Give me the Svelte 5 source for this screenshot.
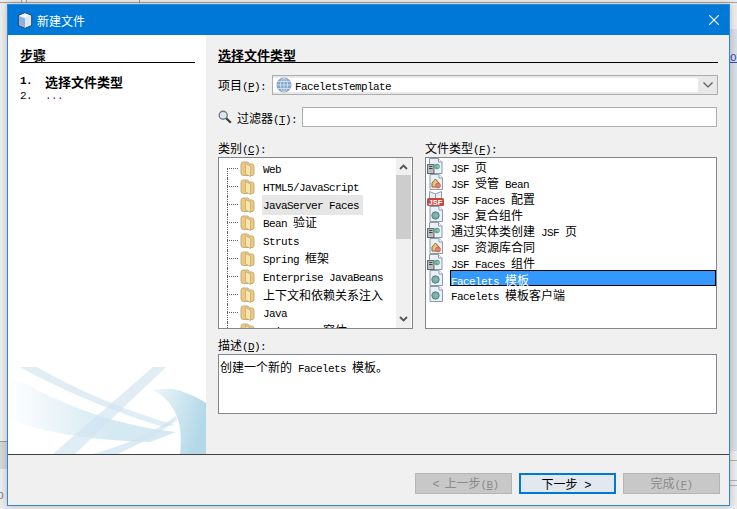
<script>
	const categories = [
		'Web',
		'HTML5/JavaScript',
		'JavaServer Faces',
		'Bean 验证',
		'Struts',
		'Spring 框架',
		'Enterprise JavaBeans',
		'上下文和依赖关系注入',
		'Java',
		'Swing GUI 窗体'
	];

	const fileTypes = [
		{ name: 'JSF 页', icon: 'server' },
		{ name: 'JSF 受管 Bean', icon: 'bean' },
		{ name: 'JSF Faces 配置', icon: 'jsf' },
		{ name: 'JSF 复合组件', icon: 'globe' },
		{ name: '通过实体类创建 JSF 页', icon: 'server' },
		{ name: 'JSF 资源库合同', icon: 'bean' },
		{ name: 'JSF Faces 组件', icon: 'server' },
		{ name: 'Facelets 模板', icon: 'globe' },
		{ name: 'Facelets 模板客户端', icon: 'globe' }
	];

	// ascii runs go in the narrow latin face, the rest stays in the CJK one
	function runs(text) {
		return text.match(/[\x00-\x7f]+|[^\x00-\x7f]+/g).map((part) => ({
			part,
			latin: part.charCodeAt(0) < 128
		}));
	}
</script>

{#snippet mixed(text)}
	{#each runs(text) as run}<span class={run.latin ? 'lat' : ''}>{run.part}</span>{/each}
{/snippet}

{#snippet label(text, key)}
	<span>{text}</span><span class="lat">(<u>{key}</u>):</span>
{/snippet}

{#snippet page()}
	<path d="M2.500.5h9l3.500 3.500v11.500h-12.500z" fill="#eaf0f5" stroke="#8e9aa6" />
	<path d="M11.500.5v3.500h3.500" fill="#fff" stroke="#8e9aa6" />
{/snippet}

{#snippet fileIcon(kind)}
	<svg class="ficon" viewBox="0 0 20 17" width="20" height="17">
		{#if kind === 'server'}
			{@render page()}
			<rect x=".5" y="6.500" width="6.500" height="9" fill="#b8bcc0" stroke="#666" />
			<path d="M2 8.500h3.500M2 10.500h3.500" stroke="#444" />
			<circle cx="10" cy="8.500" r="2.800" fill="#5aa5a0" />
			<path d="M8.500 8.500h3.500M10.500 7l1.500 1.500-1.500 1.500" fill="none" stroke="#8fd070" />
		{:else if kind === 'bean'}
			<g transform="translate(.5 0)">{@render page()}</g>
			<path d="M5 9l3.500-4L12 9v4H5z" fill="#edc27a" stroke="#8a6a3a" />
			<circle cx="11" cy="11.500" r="2.500" fill="#e48073" stroke="#b5554a" stroke-width=".6" />
		{:else if kind === 'jsf'}
			<path d="M2.500 1.500l6 2.500 6-2.500v9h-12z" fill="#e8eef4" stroke="#8e9aa6" />
			<path d="M8.500 4v6" stroke="#8e9aa6" />
			<rect x="0" y="8" width="17" height="8" rx="1.500" fill="#c0483f" />
			<text x="8.500" y="14.800" text-anchor="middle" class="jsf-label">JSF</text>
		{:else}
			<g transform="translate(.5 0)">{@render page()}</g>
			<circle cx="8.500" cy="9.500" r="3.700" fill="#78a9b8" stroke="#56808d" />
			<path d="M6.300 9.500h3.800M8.300 7.700l2 1.800-2 1.800" fill="none" stroke="#7dc766" stroke-width="1.100" />
		{/if}
	</svg>
{/snippet}

<div class="screen">
	<div class="backdrop" aria-hidden="true">
		<i class="b-top"></i>
		<i class="b-v1"></i>
		<i class="b-v2"></i>
		<i class="b-v3"></i>
		<i class="b-right"></i>
		<i class="b-link">OT</i>
		<i class="b-left"></i>
		<i class="b-leftline"></i>
		<i class="b-r1"></i>
		<i class="b-r2"></i>
		<i class="b-r3"></i>
		<i class="b-p">p</i>
	</div>

	<div class="dialog">
		<header class="titlebar">
			<svg class="cube" viewBox="0 0 16 17" width="16" height="17">
				<path d="M8 .8l6.600 2.600v10L8 16.200 1.400 13.400v-10z" fill="#c9d9ec" stroke="#24486e" stroke-width="1.100" />
				<path d="M1.900 3.800L8 6.300v9.400l-6.100-2.600z" fill="#8fb0d8" />
				<path d="M8 6.300l6.100-2.500L8 1.300 1.900 3.800z" fill="#f0f4f8" />
				<path d="M8 6.300l6.100-2.500v9.300L8 15.700z" fill="#dfe8ee" />
			</svg>
			<span class="title">新建文件</span>
			<svg class="close" viewBox="0 0 10 10" width="10" height="10">
				<path d="M0 0l10 10M10 0L0 10" stroke="#fff" stroke-width="1.100" />
			</svg>
		</header>

		<div class="body">
			<aside class="steps">
				<h2 class="heading">步骤</h2>
				<ol>
					<li class="current"><span class="lat num">1.</span><span>选择文件类型</span></li>
					<li class="next"><span class="lat num">2.</span><span class="lat dots">...</span></li>
				</ol>
				<svg class="swoosh" viewBox="8 365 198 89" width="198" height="89" aria-hidden="true">
					<defs>
						<linearGradient id="fade" x1="0" x2="1" y1="0" y2="0">
							<stop offset="0" stop-color="#d5e9f3" stop-opacity=".05" />
							<stop offset=".6" stop-color="#d5e9f3" />
						</linearGradient>
						<linearGradient id="swing" x1="0" x2="1" y1="0" y2=".35">
							<stop offset="0" stop-color="#eef6f9" />
							<stop offset="1" stop-color="#b3d8e8" />
						</linearGradient>
					</defs>
					<path d="M10 376C60 403 110 425 176 432L150 442C100 441 50 434 10 420z" fill="url(#fade)" />
					<path d="M20 367H37C80 392 130 412 175 425L163 427C115 412 65 392 20 367z" fill="#cfe4ef" opacity=".65" />
					<path d="M166 367H153L53 454H75z" fill="#cfe4ef" opacity=".65" />
					<path d="M153 390C160 389 168 389 173 389C186 392 197 397 206 403V454H180C184 425 176 402 153 390z" fill="url(#swing)" />
					<path d="M93 454C120 446 150 436 176 416L177 420C155 437 130 448 118 454z" fill="#cfe4ef" opacity=".7" />
				</svg>
			</aside>

			<main class="content">
				<h2 class="heading">选择文件类型</h2>

				<div class="row combo-row">
					<label class="field-label tight">{@render label('项目', 'P')}</label>
					<div class="combo">
						<div class="combo-value">
							<svg viewBox="0 0 16 16" width="16" height="16">
								<circle cx="8" cy="8" r="7" fill="#7fa6cc" stroke="#8a9bb0" />
								<path d="M1 8h14M2 4.500h12M2 11.500h12M8 1v14" stroke="#cfdeec" fill="none" />
								<ellipse cx="8" cy="8" rx="3.500" ry="7" stroke="#cfdeec" fill="none" />
							</svg>
							<span class="lat">FaceletsTemplate</span>
						</div>
						<svg class="chev" viewBox="0 0 10 6" width="10" height="6">
							<path d="M.5.5L5 5 9.500.5" fill="none" stroke="#555" stroke-width="1.100" />
						</svg>
					</div>
				</div>

				<div class="row filter-row">
					<svg class="search" viewBox="0 0 14 14" width="14" height="14">
						<circle cx="5.200" cy="5.200" r="4" fill="#dbe8f2" stroke="#6c7a86" stroke-width="1.400" />
						<path d="M8.300 8.300l4.500 4.500" stroke="#3c3c3c" stroke-width="2.200" />
					</svg>
					<label class="field-label">{@render label('过滤器', 'T')}</label>
					<input class="filter" type="text" />
				</div>

				<div class="lists">
					<div class="col">
						<label class="field-label tight">{@render label('类别', 'C')}</label>
						<div class="listbox tree-box">
							<ul class="tree">
								{#each categories as item}
									<li class:active={item === 'JavaServer Faces'}>
										<i class="twig"></i>
										<svg viewBox="0 0 15 17" width="15" height="17">
											<path d="M1 3.500Q1 1 3 1h4q2 0 2 2h2.500q2.500 0 2.500 2.500v7q0 2-2 2H3.500Q1 14.500 1 12z" fill="#ecc982" stroke="#c4ad76" />
											<path d="M5.500 2.500l5 2.500v10.500l-5-2.500z" fill="#f8e4ad" stroke="#cdb479" />
										</svg>
										<span class="name">{@render mixed(item)}</span>
									</li>
								{/each}
							</ul>
							<div class="scrollbar">
								<svg viewBox="0 0 9 6" width="9" height="6"><path d="M1 5l3.500-3.500L8 5" fill="none" stroke="#555" stroke-width="1.800" /></svg>
								<div class="track"><div class="thumb"></div></div>
								<svg viewBox="0 0 9 6" width="9" height="6"><path d="M1 1l3.500 3.500L8 1" fill="none" stroke="#555" stroke-width="1.800" /></svg>
							</div>
						</div>
					</div>
					<div class="col">
						<label class="field-label tight">{@render label('文件类型', 'F')}</label>
						<ul class="listbox types">
							{#each fileTypes as item}
								<li class:selected={item.name === 'Facelets 模板'}>
									{@render fileIcon(item.icon)}
									<span class="name">{@render mixed(item.name)}</span>
								</li>
							{/each}
						</ul>
					</div>
				</div>

				<label class="field-label tight desc-label">{@render label('描述', 'D')}</label>
				<div class="desc">{@render mixed('创建一个新的 Facelets 模板。')}</div>
			</main>
		</div>

		<footer class="buttons">
			<button disabled><span class="chevron">&lt;</span> 上一步<span class="lat">(<u>B</u>)</span></button>
			<button class="primary">下一步 <span class="chevron">&gt;</span></button>
			<button disabled>完成<span class="lat">(<u>F</u>)</span></button>
		</footer>
	</div>
</div>

<style>
	:global(body) {
		margin: 0;
		background: #f0f0f0;
	}

	.screen {
		position: relative;
		width: 737px;
		height: 509px;
		overflow: hidden;
		background: #ececec;
		font-family: 'Noto Sans CJK SC', 'Liberation Sans', sans-serif;
		font-size: 12px;
		color: #000;
		display: flow-root;
	}

	.backdrop i {
		position: absolute;
		display: block;
		font-style: normal;
	}

	.b-top { left: 0; top: 2px; width: 737px; height: 1px; background: #a3a3a3; }
	.b-v1 { left: 21px; top: 0; width: 1px; height: 3px; background: #999; }
	.b-v2 { left: 26px; top: 0; width: 1px; height: 3px; background: #999; }
	.b-v3 { left: 139px; top: 0; width: 1px; height: 3px; background: #999; }
	.b-right { left: 730px; top: 29px; width: 7px; height: 422px; background: #d9dde6; }
	.b-link { left: 730px; top: 52px; color: #3a48b0; font: 11px 'Liberation Mono', monospace; text-decoration: underline; }
	.b-left { left: 0; top: 441px; width: 7px; height: 28px; background: #d5d5d5; }
	.b-leftline { left: 0; top: 441px; width: 7px; height: 1px; background: #9a9a9a; }
	.b-r1 { left: 730px; top: 460px; width: 7px; height: 1px; background: #b0b0b0; }
	.b-r2 { left: 730px; top: 480px; width: 7px; height: 1px; background: #b0b0b0; }
	.b-r3 { left: 730px; top: 485px; width: 7px; height: 1px; background: #b0b0b0; }
	.b-p { left: -3px; top: 488px; color: #7f7f9a; font: 12px 'Liberation Sans', sans-serif; }

	.dialog {
		position: relative;
		box-sizing: border-box;
		width: 723px;
		height: 502px;
		margin: 4px 0 0 7px;
		display: flex;
		flex-direction: column;
		background: #f0f0f0;
		border: 1px solid #2d87d3;
		box-shadow: 0 0 7px rgba(0, 0, 0, 0.22);
	}

	.lat {
		font-family: 'Liberation Mono', monospace;
		font-size: 11px;
		letter-spacing: -0.6px;
		white-space: pre;
	}

	.jsf-label {
		font-family: 'Liberation Sans', sans-serif;
		font-size: 7.500px;
		font-weight: 700;
		fill: #fff;
	}

	.titlebar {
		height: 30px;
		flex: none;
		display: flex;
		align-items: center;
		padding: 0 10px 0 9px;
		background: #0078d7;
		color: #fff;
	}

	.cube {
		margin-right: 4px;
		margin-top: 1px;
	}

	.title {
		font-size: 12px;
		line-height: 1;
		margin-top: 1px;
	}

	.close {
		margin-left: auto;
	}

	.body {
		flex: none;
		height: 419px;
		display: flex;
	}

	.heading {
		margin: 0;
		height: 15px;
		line-height: 15px;
		font-size: 13px;
		font-weight: 700;
		border-bottom: 1px solid #000;
	}

	.steps {
		position: relative;
		box-sizing: border-box;
		width: 198px;
		flex: none;
		padding: 12px 11px 0 12px;
		background: #fff;
	}

	ol,
	ul {
		list-style: none;
		margin: 0;
		padding: 0;
	}

	.steps ol {
		margin-top: 11px;
	}

	.steps li {
		display: flex;
		align-items: center;
		height: 15px;
		line-height: 15px;
	}

	.current {
		font-size: 13px;
		font-weight: 700;
	}

	.num {
		width: 25px;
		flex: none;
	}

	.dots {
		color: #70107a;
	}

	.swoosh {
		position: absolute;
		left: 0;
		bottom: 0;
	}

	.content {
		box-sizing: border-box;
		flex: 1;
		min-width: 0;
		padding: 12px 11px 0 12px;
	}

	.row {
		display: flex;
		align-items: center;
		height: 20px;
		margin-top: 12px;
	}

	.field-label {
		display: block;
		height: 17px;
		line-height: 17px;
		white-space: nowrap;
	}

	.field-label.tight {
		line-height: 15px;
	}

	.combo {
		box-sizing: border-box;
		width: 446px;
		height: 20px;
		margin-left: auto;
		display: flex;
		align-items: center;
		border: 1px solid #adadad;
		background: #e8e8e8;
	}

	.combo-value {
		box-sizing: border-box;
		width: 425px;
		height: 14px;
		display: flex;
		align-items: center;
		gap: 2px;
		padding-left: 3px;
		background: #fff;
	}

	.combo-value svg {
		margin: -2px 0;
	}

	.combo-value .lat {
		margin-left: 1px;
		padding-top: 3px;
	}

	.chev {
		margin-left: 5px;
	}

	.search {
		margin-right: 5px;
	}

	.filter {
		box-sizing: border-box;
		width: 415px;
		height: 20px;
		margin: 0 1px 0 auto;
		padding: 0;
		border: 1px solid #adadad;
		background: #fff;
	}

	.lists {
		display: grid;
		grid-template-columns: 195px 292px;
		gap: 12px;
		margin-top: 13px;
	}

	.listbox {
		box-sizing: border-box;
		height: 172px;
		border: 1px solid #82878f;
		background: #fff;
		overflow: hidden;
	}

	.tree-box {
		display: flex;
	}

	.tree {
		flex: 1;
		min-width: 0;
		padding: 2px 0 0 8px;
	}

	.tree li {
		display: flex;
		align-items: center;
		height: 18px;
		white-space: nowrap;
	}

	.twig {
		position: relative;
		flex: none;
		align-self: stretch;
		width: 11px;
		margin-right: 2px;
	}

	.twig::before {
		content: '';
		position: absolute;
		left: 0;
		top: 0;
		bottom: 0;
		border-left: 1px dotted #666;
	}

	.tree li:first-child .twig::before {
		top: 8px;
	}

	.twig::after {
		content: '';
		position: absolute;
		left: 0;
		right: 0;
		top: 8px;
		border-top: 1px dotted #666;
	}

	.tree .name {
		margin-left: 8px;
		line-height: 18px;
	}

	.tree .active .name {
		background: #e6e6e6;
		margin-left: 7px;
		padding: 0 4px 0 1px;
	}

	.scrollbar {
		flex: none;
		width: 15px;
		margin-right: 1px;
		display: flex;
		flex-direction: column;
		align-items: center;
		background: #f0f0f0;
	}

	.scrollbar svg {
		flex: none;
		margin: 6px 0;
	}

	.track {
		flex: 1;
		width: 100%;
		margin: -1px 0;
	}

	.thumb {
		height: 64px;
		background: #cdcdcd;
	}

	.types li {
		display: flex;
		align-items: center;
		box-sizing: border-box;
		height: 16px;
		white-space: nowrap;
	}

	.ficon {
		flex: none;
		margin: -1px 3px -1px 1px;
		overflow: visible;
	}

	.types .name {
		padding-top: 3px;
		padding-left: 1px;
		line-height: 16px;
	}

	.types .selected .name {
		flex: 1;
		align-self: stretch;
		box-sizing: border-box;
		padding: 2px 0 0 0;
		line-height: 14px;
		background: #3399ff;
		border: 1px solid #000;
		color: #fff;
	}

	.desc-label {
		margin-top: 8px;
	}

	.desc {
		box-sizing: border-box;
		width: 499px;
		height: 60px;
		padding: 3px 1px;
		line-height: 17px;
		white-space: nowrap;
		border: 1px solid #82878f;
		background: #fff;
	}

	.buttons {
		flex: none;
		box-sizing: border-box;
		display: flex;
		justify-content: flex-end;
		gap: 7px;
		padding: 18px 9px 0 0;
		border-top: 1px solid #404040;
		height: 51px;
	}

	button {
		box-sizing: border-box;
		width: 97px;
		height: 21px;
		padding: 0;
		font: inherit;
		line-height: 17px;
		color: #000;
		background: #e1e8f0;
		border: 2px solid #0078d7;
		border-radius: 0;
	}

	button:disabled {
		color: #8a8a8a;
		background: #c8c8c8;
		border: 1px solid #b5b5b5;
	}

	.chevron {
		font-family: 'Liberation Mono', monospace;
		margin-left: 2px;
		padding: 0 2px;
	}
</style>
